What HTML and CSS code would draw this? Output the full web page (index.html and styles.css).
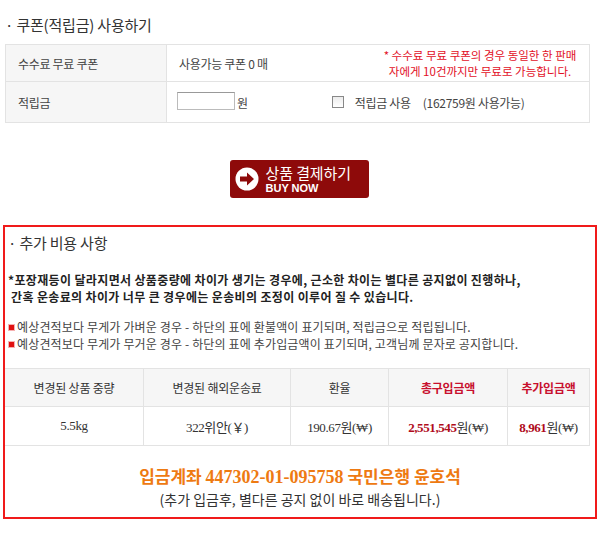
FILE: index.html
```html
<!DOCTYPE html>
<html>
  <head>
    <title>쿠폰 사용하기</title>
    <link rel="stylesheet" href="styles.css">
  </head>
  <body>
    <div class="page">
      <h2 class="sec-title">· 쿠폰(적립금) 사용하기</h2>
      <table class="coupon">
        <tr class="row1">
          <th>수수료 무료 쿠폰</th>
          <td>
            <div class="coupon-row">
              <span>사용가능 쿠폰 0 매</span>
              <span class="note">* 수수료 무료 쿠폰의 경우 동일한 한 판매<br>자에게 10건까지만 무료로 가능합니다.</span>
            </div>
          </td>
        </tr>
        <tr class="row2">
          <th>적립금</th>
          <td>
            <div class="point-row">
              <input type="text" class="point-input"> <span class="won">원</span>
              <label class="use-point">
                <span class="check"></span>
                <span>적립금 사용</span>
                <span class="avail">(162759원 사용가능)</span>
              </label>
            </div>
          </td>
        </tr>
      </table>

      <div class="buy-wrap">
        <a class="buy-btn" href="#">
          <svg width="24" height="24" viewBox="0 0 24 24">
            <circle cx="12" cy="12" r="11.5" fill="#fff"/>
            <path d="M5 9.5h7v-4l7 6.5-7 6.5v-4H5z" fill="#8e0a0a"/>
          </svg>
          <span class="buy-text">
            <span class="ko">상품 결제하기</span>
            <span class="en">BUY NOW</span>
          </span>
        </a>
      </div>

      <div class="extra">
        <h2 class="sec-title">· 추가 비용 사항</h2>
        <p class="warn">*포장재등이 달라지면서 상품중량에 차이가 생기는 경우에, 근소한 차이는 별다른 공지없이 진행하나,<br>&nbsp;간혹 운송료의 차이가 너무 큰 경우에는 운송비의 조정이 이루어 질 수 있습니다.</p>
        <ul class="bullets">
          <li>예상견적보다 무게가 가벼운 경우 - 하단의 표에 환불액이 표기되며, 적립금으로 적립됩니다.</li>
          <li>예상견적보다 무게가 무거운 경우 - 하단의 표에 추가입금액이 표기되며, 고객님께 문자로 공지합니다.</li>
        </ul>
        <table class="cost">
          <tr>
            <th class="c1">변경된 상품 중량</th>
            <th class="c2">변경된 해외운송료</th>
            <th class="c3">환율</th>
            <th class="c4 red">총구입금액</th>
            <th class="c5 red">추가입금액</th>
          </tr>
          <tr>
            <td>5.5kg</td>
            <td>322위안(￥)</td>
            <td>190.67원(₩)</td>
            <td><b>2,551,545</b>원(₩)</td>
            <td><b>8,961</b>원(₩)</td>
          </tr>
        </table>
        <p class="account">입금계좌 <span class="num">447302-01-095758</span> 국민은행 윤호석</p>
        <p class="after">(추가 입금후, 별다른 공지 없이 바로 배송됩니다.)</p>
      </div>
    </div>
  </body>
</html>
```

FILE: styles.css
```css
body {
  margin: 0;
  background: #fff;
  color: #333;
  font-family: "Noto Sans CJK KR", "Liberation Sans", sans-serif;
  font-size: 12px;
}
.page {
  width: 598px;
  padding-top: 15px;
}
.sec-title {
  margin: 0 0 9px 5px;
  font-size: 15px;
  font-weight: normal;
  line-height: 20px;
  color: #333;
  letter-spacing: -0.2px;
}
table {
  border-collapse: collapse;
}
.coupon {
  width: 585px;
  margin-left: 5px;
}
.coupon th,
.coupon td {
  border: 1px solid #e3e3e3;
  padding: 0 12px;
  text-align: left;
  font-weight: normal;
  color: #444;
  letter-spacing: -0.3px;
}
.coupon th {
  width: 136px;
  background: #f6f6f6;
}
.coupon td {
  padding-right: 0;
}
.coupon .row1 th,
.coupon .row1 td {
  height: 36px;
}
.coupon .row2 th,
.coupon .row2 td {
  height: 40px;
}
.coupon-row {
  display: flex;
  justify-content: space-between;
  align-items: center;
}
.note {
  width: 218px;
  color: #e2101f;
  line-height: 16px;
  text-align: center;
  font-size: 11.5px;
  letter-spacing: 0;
}
.point-row {
  display: flex;
  align-items: center;
  margin-left: -2px;
}
.point-input {
  width: 56px;
  height: 16px;
  border: 1px solid #bbb;
  border-top-color: #999;
  padding: 0;
  margin: 0 2px 2px 0;
}
.won {
  color: #444;
}
.use-point {
  display: flex;
  align-items: center;
  margin-left: 84px;
}
.check {
  width: 10px;
  height: 10px;
  border: 1px solid #888;
  background: linear-gradient(#ececec, #fff);
  margin-right: 11px;
}
.avail {
  margin-left: 12px;
}
.buy-wrap {
  display: flex;
  justify-content: center;
  padding: 37px 0 27px 0;
}
.buy-btn {
  display: flex;
  align-items: center;
  width: 139px;
  height: 38px;
  box-sizing: border-box;
  padding-left: 5px;
  background: #8e0a0a;
  border-radius: 3px;
  text-decoration: none;
  color: #fff;
}
.buy-text {
  display: flex;
  flex-direction: column;
  margin-left: 7px;
}
.buy-text .ko {
  font-size: 15px;
  line-height: 18px;
  letter-spacing: -0.1px;
}
.buy-text .en {
  font-family: "Liberation Sans", sans-serif;
  font-weight: bold;
  font-size: 11px;
  line-height: 12px;
}
.extra {
  width: 590px;
  margin-left: 3px;
  border: 2px solid #f01a1a;
  padding: 6px 0 8px 0;
}
.extra .sec-title {
  margin: 0 0 0 3px;
}
.warn {
  margin: 18px 0 0 3px;
  font-weight: bold;
  color: #222;
  line-height: 17px;
  letter-spacing: 0.35px;
}
.bullets {
  list-style: none;
  margin: 13px 0 0 3px;
  padding: 0;
  line-height: 17px;
  color: #444;
  letter-spacing: 0.15px;
}
.bullets li::before {
  content: "";
  display: inline-block;
  width: 5px;
  height: 5px;
  background: #e01010;
  border: 1px solid #f7b0b0;
  margin-right: 2px;
  vertical-align: 1px;
}
.cost {
  width: 585px;
  margin: 16px 0 0 0;
}
.cost th,
.cost td {
  border: 1px solid #e3e3e3;
  text-align: center;
  color: #333;
}
.cost th {
  height: 35px;
  background: #f6f6f6;
  font-weight: normal;
  letter-spacing: -0.2px;
}
.cost td {
  height: 36px;
  font-family: "Liberation Serif", "Noto Sans CJK KR", serif;
  font-size: 13px;
  letter-spacing: -0.4px;
}
.cost th:first-child,
.cost td:first-child {
  border-left: none;
}
.cost .c1 { width: 136px; }
.cost .c2 { width: 144px; }
.cost .c3 { width: 95px; }
.cost .c4 { width: 116px; }
.cost th.red {
  color: #c8102e;
  font-weight: bold;
}
.cost td b {
  color: #b00c1c;
}
.account {
  margin: 19px 0 0 0;
  text-align: center;
  color: #ee7a12;
  font-weight: bold;
  font-size: 17px;
  line-height: 22px;
}
.account .num {
  font-family: "Liberation Serif", serif;
  font-size: 18px;
}
.after {
  margin: 2px 0 0 0;
  text-align: center;
  font-size: 14px;
  line-height: 19px;
  color: #333;
}
```
